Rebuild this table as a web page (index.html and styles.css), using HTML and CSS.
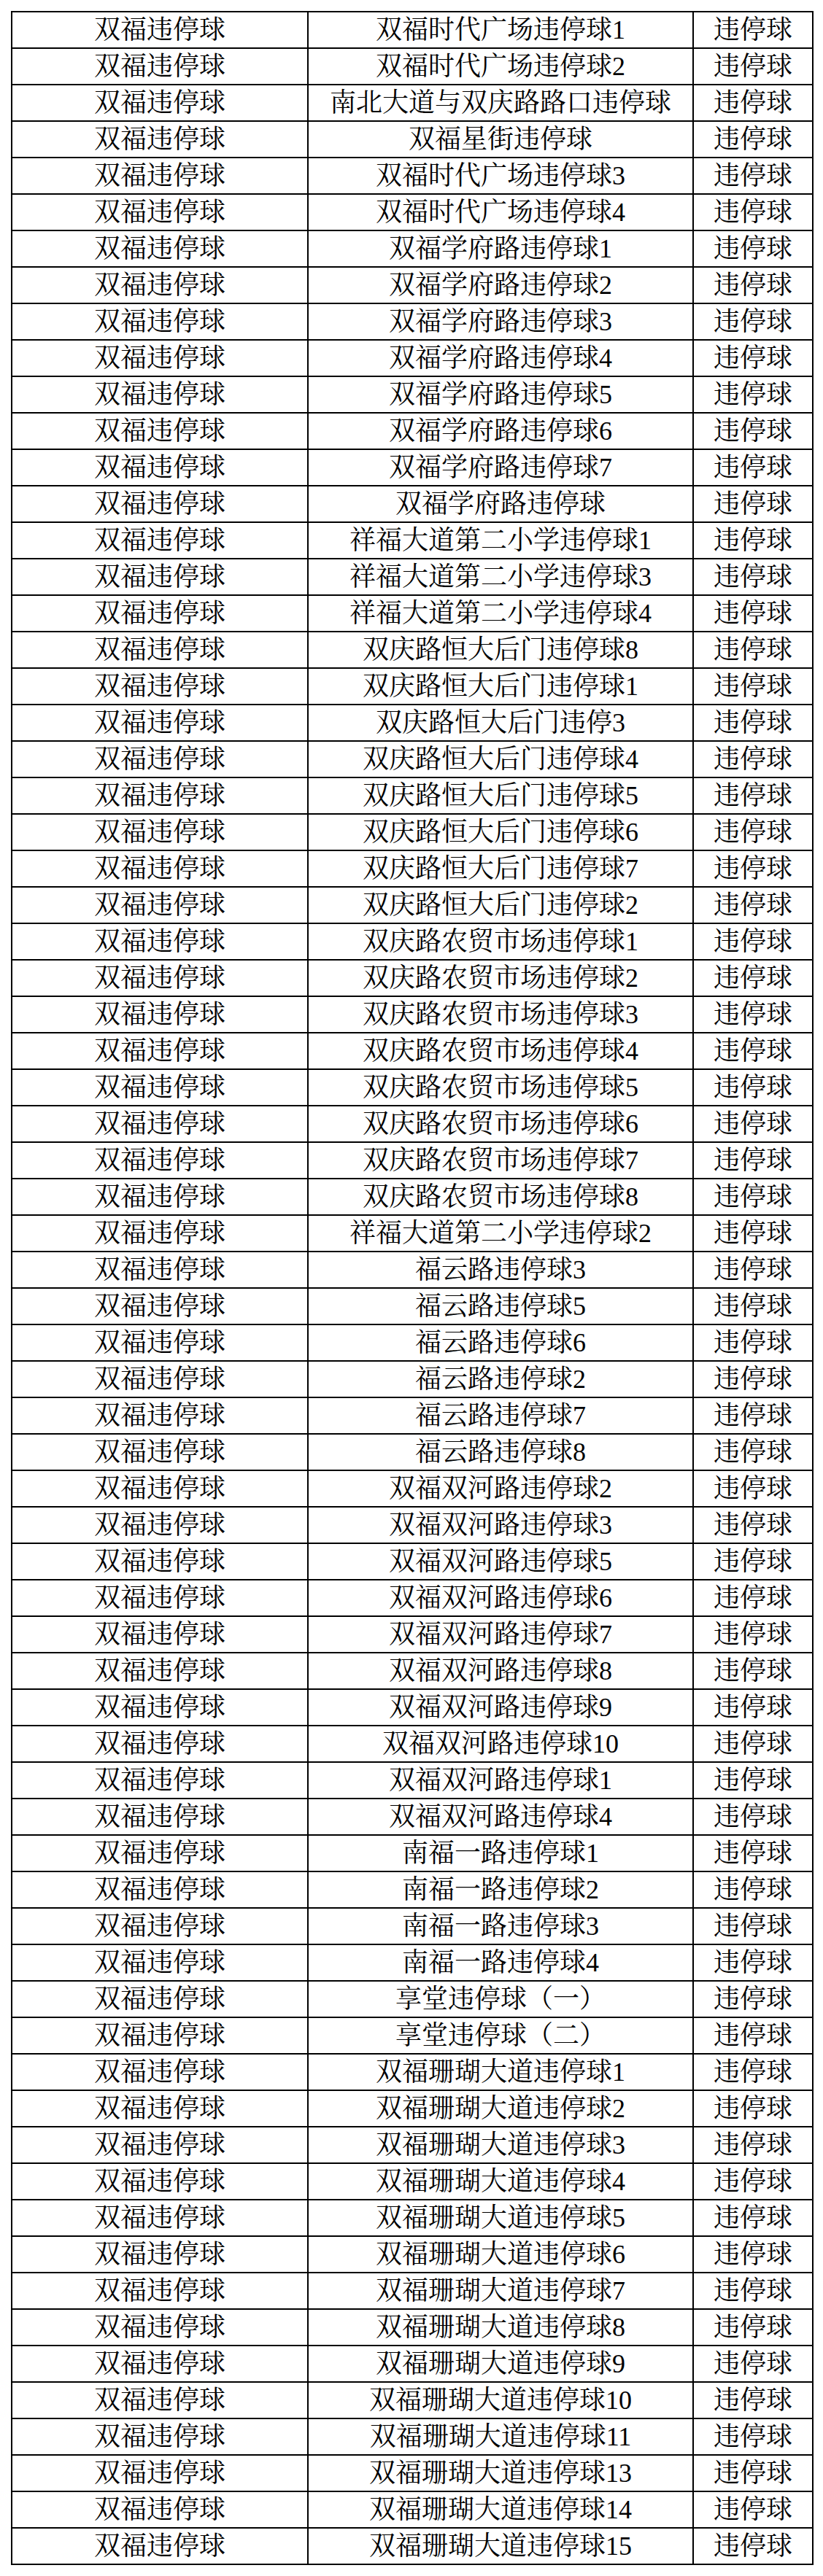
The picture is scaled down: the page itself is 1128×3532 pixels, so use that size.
FILE: index.html
```html
<!DOCTYPE html>
<html lang="zh-CN">
<head>
<meta charset="utf-8">
<title>违停球</title>
<link rel="stylesheet" href="styles.css">
</head>
<body>
<table class="list">
<colgroup><col class="c1"><col class="c2"><col class="c3"></colgroup>
<tbody>
<tr><td>双福违停球</td><td>双福时代广场违停球1</td><td>违停球</td></tr>
<tr><td>双福违停球</td><td>双福时代广场违停球2</td><td>违停球</td></tr>
<tr><td>双福违停球</td><td>南北大道与双庆路路口违停球</td><td>违停球</td></tr>
<tr><td>双福违停球</td><td>双福星街违停球</td><td>违停球</td></tr>
<tr><td>双福违停球</td><td>双福时代广场违停球3</td><td>违停球</td></tr>
<tr><td>双福违停球</td><td>双福时代广场违停球4</td><td>违停球</td></tr>
<tr><td>双福违停球</td><td>双福学府路违停球1</td><td>违停球</td></tr>
<tr><td>双福违停球</td><td>双福学府路违停球2</td><td>违停球</td></tr>
<tr><td>双福违停球</td><td>双福学府路违停球3</td><td>违停球</td></tr>
<tr><td>双福违停球</td><td>双福学府路违停球4</td><td>违停球</td></tr>
<tr><td>双福违停球</td><td>双福学府路违停球5</td><td>违停球</td></tr>
<tr><td>双福违停球</td><td>双福学府路违停球6</td><td>违停球</td></tr>
<tr><td>双福违停球</td><td>双福学府路违停球7</td><td>违停球</td></tr>
<tr><td>双福违停球</td><td>双福学府路违停球</td><td>违停球</td></tr>
<tr><td>双福违停球</td><td>祥福大道第二小学违停球1</td><td>违停球</td></tr>
<tr><td>双福违停球</td><td>祥福大道第二小学违停球3</td><td>违停球</td></tr>
<tr><td>双福违停球</td><td>祥福大道第二小学违停球4</td><td>违停球</td></tr>
<tr><td>双福违停球</td><td>双庆路恒大后门违停球8</td><td>违停球</td></tr>
<tr><td>双福违停球</td><td>双庆路恒大后门违停球1</td><td>违停球</td></tr>
<tr><td>双福违停球</td><td>双庆路恒大后门违停3</td><td>违停球</td></tr>
<tr><td>双福违停球</td><td>双庆路恒大后门违停球4</td><td>违停球</td></tr>
<tr><td>双福违停球</td><td>双庆路恒大后门违停球5</td><td>违停球</td></tr>
<tr><td>双福违停球</td><td>双庆路恒大后门违停球6</td><td>违停球</td></tr>
<tr><td>双福违停球</td><td>双庆路恒大后门违停球7</td><td>违停球</td></tr>
<tr><td>双福违停球</td><td>双庆路恒大后门违停球2</td><td>违停球</td></tr>
<tr><td>双福违停球</td><td>双庆路农贸市场违停球1</td><td>违停球</td></tr>
<tr><td>双福违停球</td><td>双庆路农贸市场违停球2</td><td>违停球</td></tr>
<tr><td>双福违停球</td><td>双庆路农贸市场违停球3</td><td>违停球</td></tr>
<tr><td>双福违停球</td><td>双庆路农贸市场违停球4</td><td>违停球</td></tr>
<tr><td>双福违停球</td><td>双庆路农贸市场违停球5</td><td>违停球</td></tr>
<tr><td>双福违停球</td><td>双庆路农贸市场违停球6</td><td>违停球</td></tr>
<tr><td>双福违停球</td><td>双庆路农贸市场违停球7</td><td>违停球</td></tr>
<tr><td>双福违停球</td><td>双庆路农贸市场违停球8</td><td>违停球</td></tr>
<tr><td>双福违停球</td><td>祥福大道第二小学违停球2</td><td>违停球</td></tr>
<tr><td>双福违停球</td><td>福云路违停球3</td><td>违停球</td></tr>
<tr><td>双福违停球</td><td>福云路违停球5</td><td>违停球</td></tr>
<tr><td>双福违停球</td><td>福云路违停球6</td><td>违停球</td></tr>
<tr><td>双福违停球</td><td>福云路违停球2</td><td>违停球</td></tr>
<tr><td>双福违停球</td><td>福云路违停球7</td><td>违停球</td></tr>
<tr><td>双福违停球</td><td>福云路违停球8</td><td>违停球</td></tr>
<tr><td>双福违停球</td><td>双福双河路违停球2</td><td>违停球</td></tr>
<tr><td>双福违停球</td><td>双福双河路违停球3</td><td>违停球</td></tr>
<tr><td>双福违停球</td><td>双福双河路违停球5</td><td>违停球</td></tr>
<tr><td>双福违停球</td><td>双福双河路违停球6</td><td>违停球</td></tr>
<tr><td>双福违停球</td><td>双福双河路违停球7</td><td>违停球</td></tr>
<tr><td>双福违停球</td><td>双福双河路违停球8</td><td>违停球</td></tr>
<tr><td>双福违停球</td><td>双福双河路违停球9</td><td>违停球</td></tr>
<tr><td>双福违停球</td><td>双福双河路违停球10</td><td>违停球</td></tr>
<tr><td>双福违停球</td><td>双福双河路违停球1</td><td>违停球</td></tr>
<tr><td>双福违停球</td><td>双福双河路违停球4</td><td>违停球</td></tr>
<tr><td>双福违停球</td><td>南福一路违停球1</td><td>违停球</td></tr>
<tr><td>双福违停球</td><td>南福一路违停球2</td><td>违停球</td></tr>
<tr><td>双福违停球</td><td>南福一路违停球3</td><td>违停球</td></tr>
<tr><td>双福违停球</td><td>南福一路违停球4</td><td>违停球</td></tr>
<tr><td>双福违停球</td><td>享堂违停球（一）</td><td>违停球</td></tr>
<tr><td>双福违停球</td><td>享堂违停球（二）</td><td>违停球</td></tr>
<tr><td>双福违停球</td><td>双福珊瑚大道违停球1</td><td>违停球</td></tr>
<tr><td>双福违停球</td><td>双福珊瑚大道违停球2</td><td>违停球</td></tr>
<tr><td>双福违停球</td><td>双福珊瑚大道违停球3</td><td>违停球</td></tr>
<tr><td>双福违停球</td><td>双福珊瑚大道违停球4</td><td>违停球</td></tr>
<tr><td>双福违停球</td><td>双福珊瑚大道违停球5</td><td>违停球</td></tr>
<tr><td>双福违停球</td><td>双福珊瑚大道违停球6</td><td>违停球</td></tr>
<tr><td>双福违停球</td><td>双福珊瑚大道违停球7</td><td>违停球</td></tr>
<tr><td>双福违停球</td><td>双福珊瑚大道违停球8</td><td>违停球</td></tr>
<tr><td>双福违停球</td><td>双福珊瑚大道违停球9</td><td>违停球</td></tr>
<tr><td>双福违停球</td><td>双福珊瑚大道违停球10</td><td>违停球</td></tr>
<tr><td>双福违停球</td><td>双福珊瑚大道违停球11</td><td>违停球</td></tr>
<tr><td>双福违停球</td><td>双福珊瑚大道违停球13</td><td>违停球</td></tr>
<tr><td>双福违停球</td><td>双福珊瑚大道违停球14</td><td>违停球</td></tr>
<tr><td>双福违停球</td><td>双福珊瑚大道违停球15</td><td>违停球</td></tr>
</tbody>
</table>
</body>
</html>
```

FILE: styles.css
```css
html, body {
  margin: 0;
  padding: 0;
  background: #ffffff;
}

body {
  padding: 15px 0 0 15px;
  font-family: "Liberation Serif", "Noto Serif CJK SC", "Noto Sans CJK SC", serif;
  color: #000000;
}

.list {
  border-collapse: collapse;
  table-layout: fixed;
  width: 1098px;
}

.c1 { width: 406px; }
.c2 { width: 528px; }
.c3 { width: 164px; }

.list td {
  border: 2px solid #000000;
  height: 48px;
  padding: 0;
  text-align: center;
  vertical-align: middle;
  font-size: 36px;
  line-height: 48px;
  white-space: nowrap;
  overflow: hidden;
}
```
